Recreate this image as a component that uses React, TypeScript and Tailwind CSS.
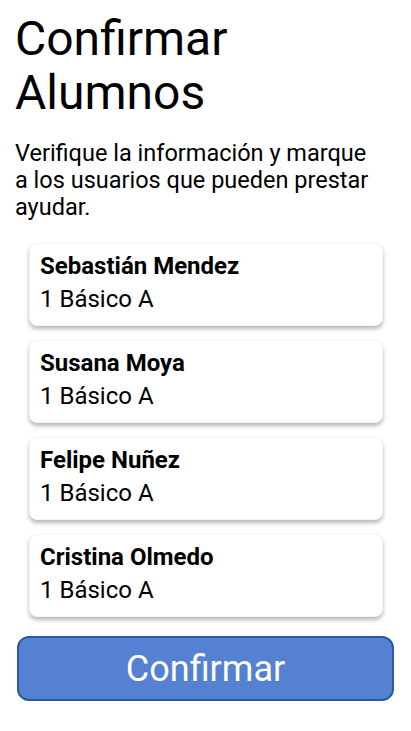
const students = [
  { name: "Sebastián Mendez", course: "1 Básico A" },
  { name: "Susana Moya", course: "1 Básico A" },
  { name: "Felipe Nuñez", course: "1 Básico A" },
  { name: "Cristina Olmedo", course: "1 Básico A" },
];

const App = () => {
  return (
    <div className="min-h-[731px] w-[411px] bg-white font-['Roboto',sans-serif] text-black">
      <div className="px-[15px] pt-[12px]">
        {/* Title */}
        <h1 className="text-[48px] leading-[54px] font-normal">
          Confirmar
          <br />
          Alumnos
        </h1>

        {/* Description */}
        <p className="mt-[20px] w-[366px] text-[23.5px] leading-[27px]">
          Verifique la información y marque a los usuarios que pueden prestar
          ayudar.
        </p>
      </div>

      {/* Student cards */}
      <div className="mt-[22px] flex flex-col gap-[14px] pl-[29px] pr-[28px]">
        {students.map((s) => (
          <div
            key={s.name}
            className="h-[83px] rounded-[8px] border border-gray-100 bg-white px-[10px] pt-[8px] shadow-[0_3px_4px_rgba(0,0,0,0.28)]"
          >
            <div className="text-[24px] leading-[28px] font-bold">{s.name}</div>
            <div className="mt-[5px] text-[24px] leading-[28px]">{s.course}</div>
          </div>
        ))}
      </div>

      {/* Confirm button */}
      <div className="mt-[19px] px-[17px]">
        <button className="flex h-[65px] w-full items-center justify-center rounded-[12px] border-2 border-[#2c56a6] bg-[#5581d3] text-[36px] text-white">
          Confirmar
        </button>
      </div>
    </div>
  );
};

export default App;
